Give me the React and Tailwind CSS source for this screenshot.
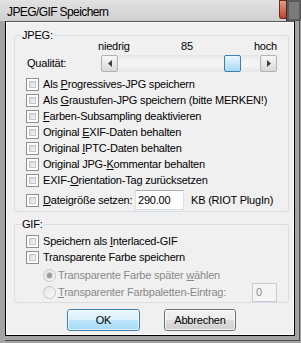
import React from "react";

const ui = "font-['Liberation_Sans',Arial,sans-serif] text-[11px] tracking-[-0.2px] text-black";

function Box() {
  return (
    <span className="flex h-[13px] w-[13px] shrink-0 border border-[#8e8f8f] bg-white p-[2px]">
      <span className="h-full w-full border border-[#c2c6ca] bg-linear-to-br from-[#d6d7d8] to-[#f8f8f8]" />
    </span>
  );
}

function Check({ children }) {
  return (
    <div className="flex h-[16px] items-center gap-[4px]">
      <Box />
      <span className="leading-[12px]">{children}</span>
    </div>
  );
}

function Radio({ checked }) {
  return (
    <span className="flex h-[13px] w-[13px] shrink-0 items-center justify-center rounded-full border border-[#c4c8cc] bg-linear-to-br from-[#e4e4e4] to-[#fbfbfb]">
      {checked && <span className="h-[5px] w-[5px] rounded-full bg-[#9a9a9a] ring-1 ring-[#d2d2d2]" />}
    </span>
  );
}

function ScrollBtn({ dir }) {
  return (
    <span className="flex h-[17px] w-[17px] shrink-0 items-center justify-center rounded-[2px] border border-[#b2b2b2] bg-linear-to-b from-[#f7f7f7] to-[#d9d9d9]">
      <svg width="4" height="7" viewBox="0 0 4 7">
        {dir === "left" ? <path d="M4 0 L0 3.5 L4 7 Z" fill="#3f3f3f" /> : <path d="M0 0 L4 3.5 L0 7 Z" fill="#3f3f3f" />}
      </svg>
    </span>
  );
}

function Button({ def, children }) {
  return (
    <div
      className={
        "flex h-[22px] items-center justify-center rounded-[3px] border " +
        (def
          ? "w-[73px] border-[#3c7fb1] bg-[linear-gradient(to_bottom,#eaf6fd_0%,#d9f0fc_50%,#bee6fd_50%,#a7d9f5_100%)]"
          : "w-[72px] border-[#707070] bg-[linear-gradient(to_bottom,#f2f2f2_0%,#ebebeb_50%,#dddddd_50%,#cfcfcf_100%)]")
      }
    >
      <span className="flex h-full w-full items-center justify-center rounded-[2px] border border-white/70">{children}</span>
    </div>
  );
}

export default function App() {
  return (
    <div className={"flex h-[343px] w-[301px] flex-col overflow-hidden bg-[#a3a3a3] " + ui}>
      {/* title bar */}
      <div className="flex h-[21px] shrink-0 bg-linear-to-b from-[#e2e2e2] to-[#d0d0d0]">
        <div className="flex flex-1 items-center pl-[7px] pt-[2px] text-[12px] tracking-[-0.6px]">JPEG/GIF Speichern</div>
        <div className="h-[19px] w-[7px] rounded-bl-[3px] border border-r-0 border-[#6b2a1f] bg-linear-to-b from-[#e69a84] to-[#c2412b]" />
        <div className="w-[15px] border-l border-[#2e2e2e] bg-[#5a5a5a] p-[2px]">
          <div className="h-full w-full bg-[#7b7b7b]" />
        </div>
      </div>

      <div className="pb-[2px] pl-[5px] pr-[1px]">
        <div className="border-b border-r border-[#4f4f4f] pb-[4px] pr-[4px]">
          <div className="h-[315px] w-[290px] border border-black border-t-[#555555]">
            <div className="flex h-full flex-col border border-white bg-[#f0f0f0] pl-[7px] pr-[4px] pt-[6px]">
              {/* JPEG group */}
              <fieldset className="rounded-[3px] border border-[#d5dfe5] pb-[1px] pl-[11px] pr-[11px]">
                <legend className="-ml-[5px] px-[1px] leading-[12px]">JPEG:</legend>
                <div className="-mt-[1px] flex h-[12px] leading-[12px]">
                  <span className="w-[72px]" />
                  <span className="w-[83px]">niedrig</span>
                  <span className="flex-1">85</span>
                  <span>hoch</span>
                </div>
                <div className="mt-[3px] flex h-[17px] items-center">
                  <span className="w-[75px] pl-[1px]">Qualität:</span>
                  <div className="flex h-[17px] flex-1 bg-[linear-gradient(to_bottom,#e6e6e6,#f4f4f4_35%,#f4f4f4_65%,#e6e6e6)]">
                    <ScrollBtn dir="left" />
                    <div className="flex flex-1 pl-[106px]">
                      <span className="h-[17px] w-[17px] rounded-[2px] border border-[#3c7fb1] bg-linear-to-b from-[#e9f6fd] to-[#a7d8f5]" />
                    </div>
                    <ScrollBtn dir="right" />
                  </div>
                </div>
                <div className="mt-[4px] flex flex-col">
                  <Check>Als <u className="underline">P</u>rogressives-JPG speichern</Check>
                  <Check>Als <u className="underline">G</u>raustufen-JPG speichern (bitte MERKEN!)</Check>
                  <Check><u className="underline">F</u>arben-Subsampling deaktivieren</Check>
                  <Check>Original <u className="underline">E</u>XIF-Daten behalten</Check>
                  <Check>Original <u className="underline">I</u>PTC-Daten behalten</Check>
                  <Check>Original JPG-<u className="underline">K</u>ommentar behalten</Check>
                  <Check>EXIF-<u className="underline">O</u>rientation-Tag zurücksetzen</Check>
                </div>
                <div className="mt-[2px] flex h-[20px] items-center">
                  <div className="flex w-[109px] items-center gap-[4px]">
                    <Box />
                    <span><u className="underline">D</u>ateigröße setzen:</span>
                  </div>
                  <div className="flex h-[20px] w-[49px] items-center border border-[#dbdfe6] border-t-[#abadb3] bg-white pl-[2px]">290.00</div>
                  <span className="ml-[7px]">KB (RIOT PlugIn)</span>
                </div>
              </fieldset>

              {/* GIF group */}
              <fieldset className="mt-[6px] rounded-[3px] border border-[#d5dfe5] pl-[11px] pr-[11px]">
                <legend className="-ml-[5px] px-[1px] leading-[12px]">GIF:</legend>
                <div className="mt-[3px] flex flex-col">
                  <Check>Speichern als <u className="underline">I</u>nterlaced-GIF</Check>
                  <Check>Transparente Farbe speichern</Check>
                </div>
                <div className="mt-[2px] flex h-[16px] items-center gap-[2px] pl-[17px] text-[#8a8a8a]">
                  <Radio checked />
                  <span>Transparente Farbe später <u className="underline">w</u>ählen</span>
                </div>
                <div className="flex h-[19px] items-center gap-[2px] pl-[17px] text-[#8a8a8a]">
                  <Radio />
                  <span><u className="underline">T</u>ransparenter Farbpaletten-Eintrag:</span>
                  <div className="ml-auto flex h-[19px] w-[25px] items-center border border-[#c9ccd0] bg-[#f4f4f4] pl-[3px]">0</div>
                </div>
              </fieldset>

              <div className="mt-[6px] flex justify-center gap-[24px]">
                <Button def>OK</Button>
                <Button>Abbrechen</Button>
              </div>
            </div>
          </div>
        </div>
      </div>
    </div>
  );
}
